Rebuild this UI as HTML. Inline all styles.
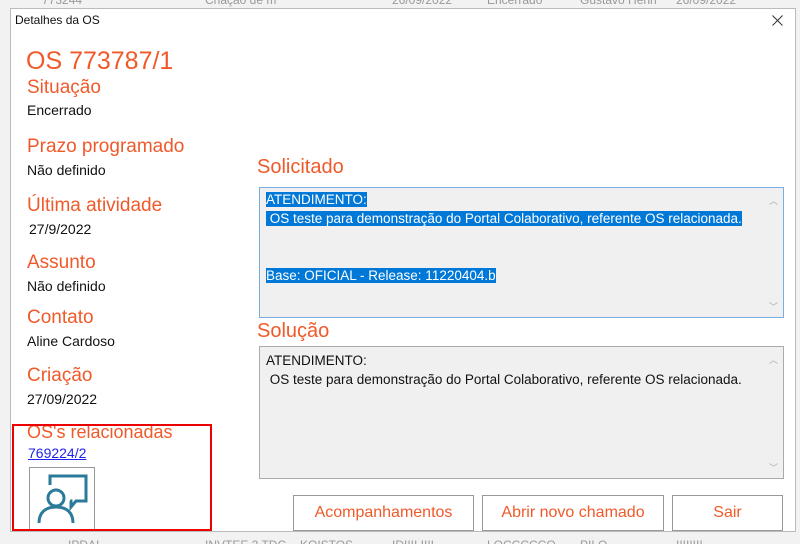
<!DOCTYPE html>
<html><head><meta charset="utf-8"><style>
*{margin:0;padding:0;box-sizing:border-box}
html,body{width:800px;height:544px;overflow:hidden}
body{background:#f2f2f2;font-family:"Liberation Sans",sans-serif;position:relative}
.a{position:absolute;white-space:nowrap}
.bg{color:#999;font-size:12px}
.dlg{position:absolute;left:10px;top:8px;width:786px;height:524px;background:#fff;border:1px solid #bbb}
.o{color:#f05a2a}
.lbl{font-size:19px;color:#f05a2a}
.val{font-size:14px;color:#111}
.box{position:absolute;left:248px;width:525px;background:#f0f0f0;border:1px solid #aaa;font-size:13.5px;color:#111}
.sel{background:#0078d7;color:#fff}
.btn{position:absolute;top:486px;height:36px;border:1px solid #999;background:#fff;color:#f05a2a;font-size:16px;text-align:center;line-height:34px}
</style></head><body>
<div class="a bg" style="left:42px;top:-7px">773244</div>
<div class="a bg" style="left:205px;top:-7px">Criação de m</div>
<div class="a bg" style="left:392px;top:-7px">26/09/2022</div>
<div class="a bg" style="left:487px;top:-7px">Encerrado</div>
<div class="a bg" style="left:580px;top:-7px">Gustavo Henri</div>
<div class="a bg" style="left:676px;top:-7px">26/09/2022</div>
<div class="a bg" style="left:68px;top:538px">IPDAI</div>
<div class="a bg" style="left:205px;top:538px">INVTEE 2 TDC</div>
<div class="a bg" style="left:300px;top:538px">KOISTOS</div>
<div class="a bg" style="left:392px;top:538px">IDIIII IIII</div>
<div class="a bg" style="left:487px;top:538px">LOCCCCCO</div>
<div class="a bg" style="left:580px;top:538px">PILO</div>
<div class="a bg" style="left:676px;top:538px">IIIIIIII</div>
<div class="dlg">
<div class="a" style="left:4px;top:4px;font-size:12px;color:#111">Detalhes da OS</div>
<svg class="a" style="left:761px;top:6px" width="11" height="11" viewBox="0 0 11 11" stroke="#333" stroke-width="1"><path d="M0.5 0.5L10.5 10.5M10.5 0.5L0.5 10.5"/></svg>
<div class="a o" style="left:15px;top:38px;font-size:25px">OS 773787/1</div>
<div class="a lbl" style="left:16px;top:68px">Situação</div>
<div class="a val" style="left:16px;top:93px">Encerrado</div>
<div class="a lbl" style="left:16px;top:127px">Prazo programado</div>
<div class="a val" style="left:16px;top:153px">Não definido</div>
<div class="a lbl" style="left:16px;top:186px">Última atividade</div>
<div class="a val" style="left:18px;top:212px">27/9/2022</div>
<div class="a lbl" style="left:16px;top:243px">Assunto</div>
<div class="a val" style="left:16px;top:269px">Não definido</div>
<div class="a lbl" style="left:16px;top:298px">Contato</div>
<div class="a val" style="left:16px;top:324px">Aline Cardoso</div>
<div class="a lbl" style="left:16px;top:356px">Criação</div>
<div class="a val" style="left:16px;top:382px">27/09/2022</div>
<div class="a lbl" style="left:16px;top:413px;font-size:18px">OS's relacionadas</div>
<div class="a val" style="left:17px;top:436px;color:#22e;text-decoration:underline">769224/2</div>
<div class="a" style="left:18px;top:458px;width:66px;height:64px;border:1px solid #999;background:#fff">
<svg width="64" height="62" viewBox="0 0 64 62" fill="none" stroke="#2c7a99" stroke-width="3">
<path d="M20 17 V8 H56 V33 H46 L41 39 V33 H40"/>
<circle cx="26" cy="30" r="8"/>
<path d="M9 55 C9 44 16 39 26 39 C36 39 43 44 43 55"/>
</svg></div>
<div class="a" style="left:1px;top:415px;width:200px;height:107px;border:2px solid #e00"></div>
<div class="a lbl" style="left:246px;top:147px;font-size:20px">Solicitado</div>
<div class="box" style="top:178px;height:131px;border-color:#7aaee0">
<div style="position:absolute;left:6px;top:2px;line-height:19px">
<span class="sel">ATENDIMENTO:</span><br><span class="sel">&nbsp;OS teste para demonstração do Portal Colaborativo, referente OS relacionada.</span><br><br><br><span class="sel">Base: OFICIAL - Release: 11220404.b</span></div>
<div class="a" style="right:5px;top:6px;font-size:9px;color:#aaa">︿</div>
<div class="a" style="right:5px;bottom:4px;font-size:9px;color:#aaa">﹀</div>
</div>
<div class="a lbl" style="left:246px;top:311px;font-size:20px">Solução</div>
<div class="box" style="top:337px;height:133px">
<div style="position:absolute;left:6px;top:4px;line-height:19px">ATENDIMENTO:<br>&nbsp;OS teste para demonstração do Portal Colaborativo, referente OS relacionada.</div>
<div class="a" style="right:5px;top:6px;font-size:9px;color:#aaa">︿</div>
<div class="a" style="right:5px;bottom:4px;font-size:9px;color:#aaa">﹀</div>
</div>
<div class="btn" style="left:282px;width:181px">Acompanhamentos</div>
<div class="btn" style="left:471px;width:182px">Abrir novo chamado</div>
<div class="btn" style="left:661px;width:111px">Sair</div>
</div>
</body></html>
